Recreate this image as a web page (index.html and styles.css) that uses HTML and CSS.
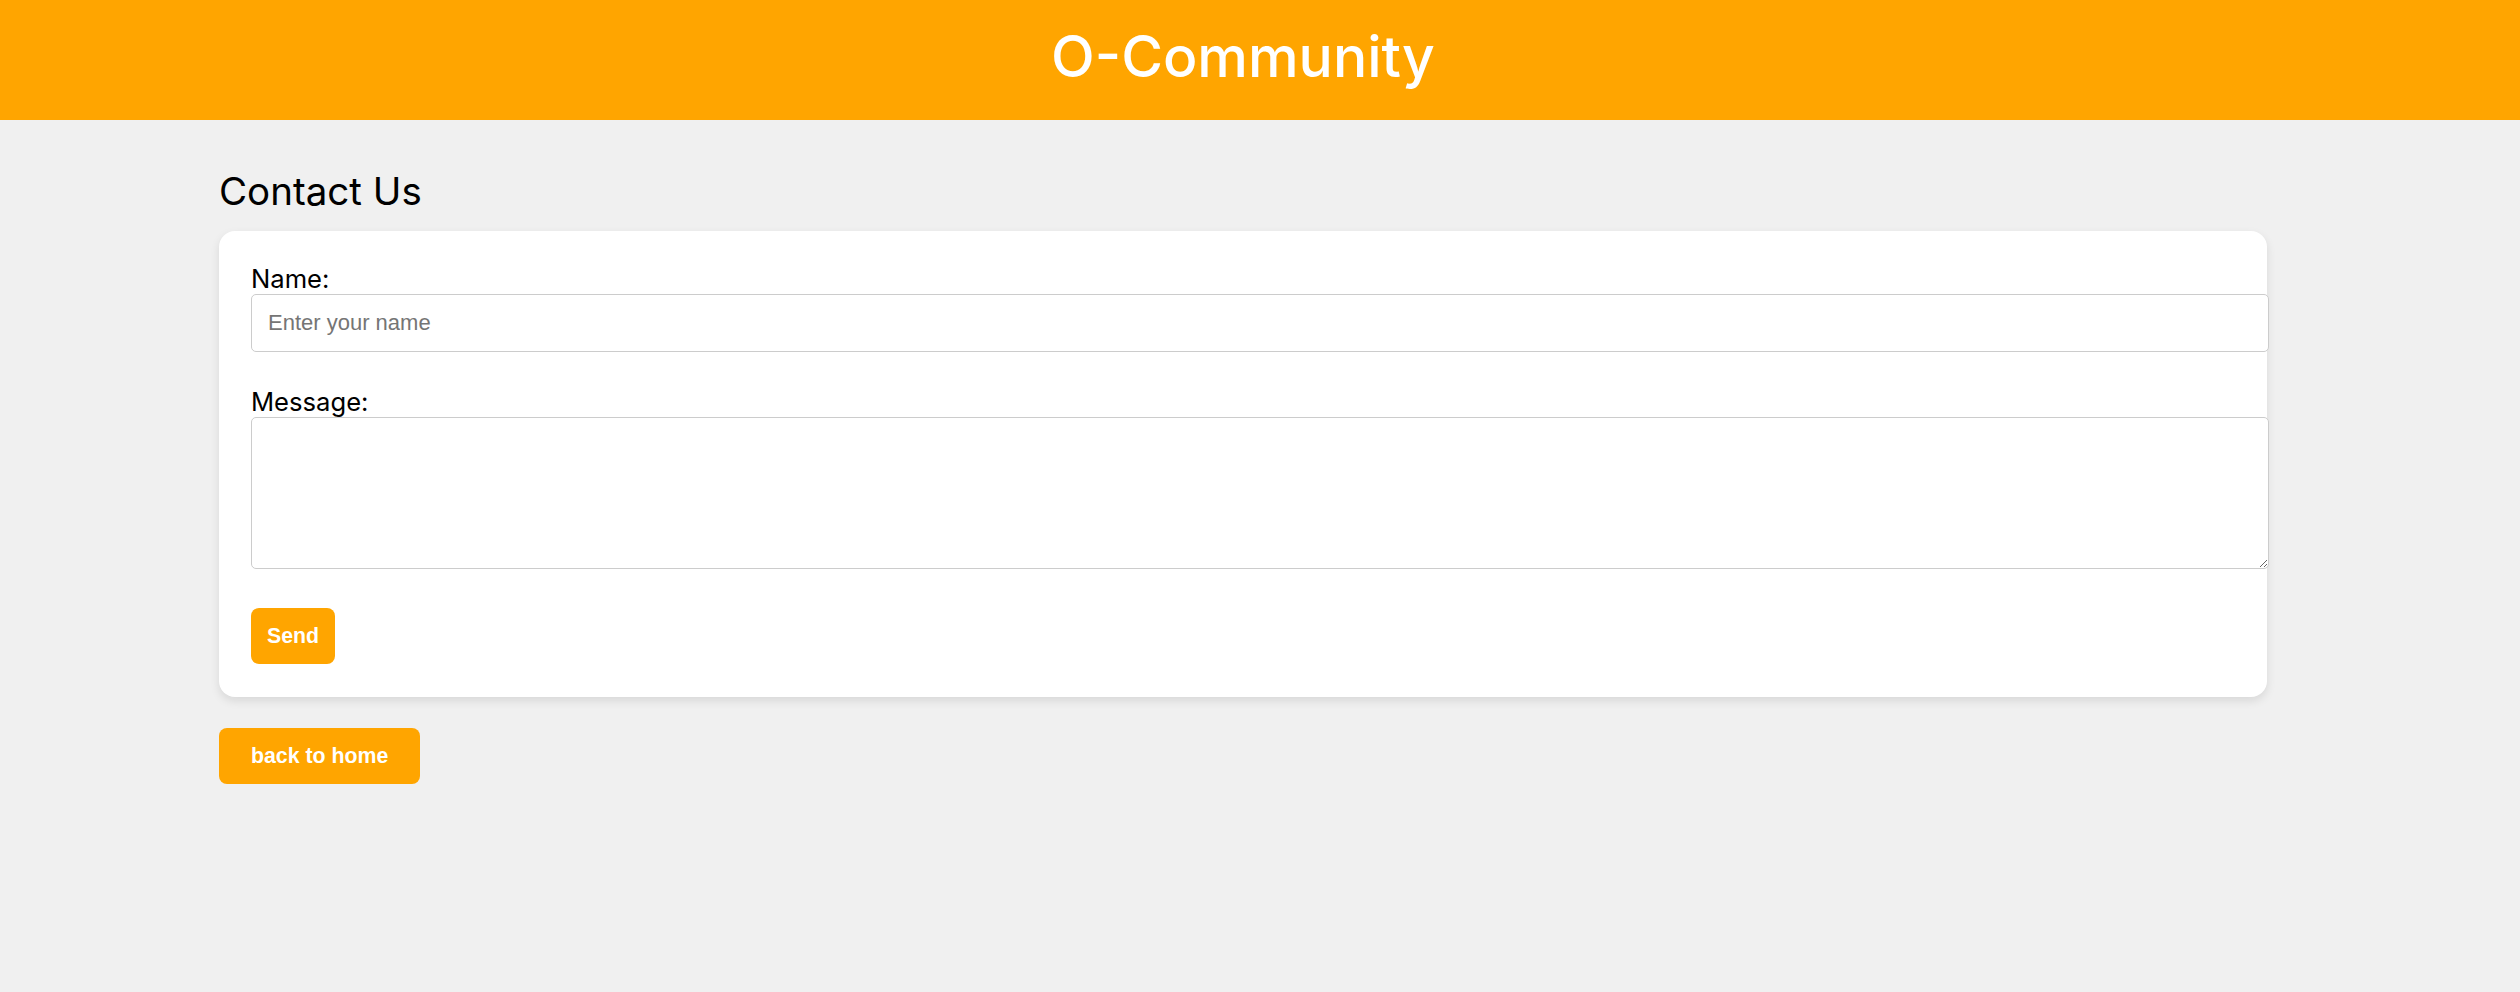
FILE: index.html
```html
<!DOCTYPE html>
<html lang="en">
<head>
<meta charset="utf-8">
<title>O-Community - Contact Us</title>
<link rel="stylesheet" href="styles.css">
</head>
<body>
<header class="site-header">
  <h1 class="site-title">O-Community</h1>
</header>
<main class="page">
  <h2 class="page-title">Contact Us</h2>
  <form class="card contact-form">
    <label class="field-label" for="name">Name:</label>
    <input class="field-input" id="name" type="text" placeholder="Enter your name">
    <label class="field-label" for="message">Message:</label>
    <textarea class="field-textarea" id="message"></textarea>
    <button class="btn" type="button">Send</button>
  </form>
  <a class="btn btn-home" href="#">back to home</a>
</main>
</body>
</html>
```
FILE: styles.css
```css
* { box-sizing: content-box; }
html, body { margin: 0; padding: 0; }
body {
  background: #f0f0f0;
  font-family: Inter, "Noto Sans", sans-serif;
  color: #000;
}
.site-header {
  background: #ffa500;
  height: 112px;
  padding: 0 34px 8px 0;
  display: flex;
  align-items: center;
  justify-content: center;
}
.site-title {
  margin: 0;
  color: #fff;
  font-size: 57px;
  font-weight: 500;
}
.page {
  padding: 48px 219px 0;
}
.page-title {
  margin: 0 0 17px;
  font-size: 38.5px;
  font-weight: 400;
}
.card {
  background: #fff;
  width: 1984px;
  padding: 32px 32px 33px;
  border-radius: 16px;
  box-shadow: 0 4px 10px rgba(0,0,0,0.1);
}
.contact-form { display: block; }
.field-label {
  display: block;
  font-size: 25.6px;
  line-height: 31px;
}
.field-input, .field-textarea {
  display: block;
  width: 100%;
  padding: 16px;
  border: 1px solid #ccc;
  border-radius: 5px;
  font-family: "Liberation Sans", Arial, sans-serif;
  font-size: 22px;
  margin: 0 0 34px;
  background: #fff;
}
.field-input { height: 24px; }
.field-input::placeholder { color: #757575; }
.field-textarea {
  height: 118px;
  margin-bottom: 39px;
}
.btn {
  display: inline-block;
  background: #ffa500;
  color: #fff;
  border: none;
  border-radius: 8px;
  padding: 16px;
  font-family: "Liberation Sans", Arial, sans-serif;
  font-weight: 700;
  font-size: 21.3px;
  line-height: 24px;
  text-decoration: none;
}
.btn-home {
  margin-top: 31px;
  padding: 16px 32px;
}
```
